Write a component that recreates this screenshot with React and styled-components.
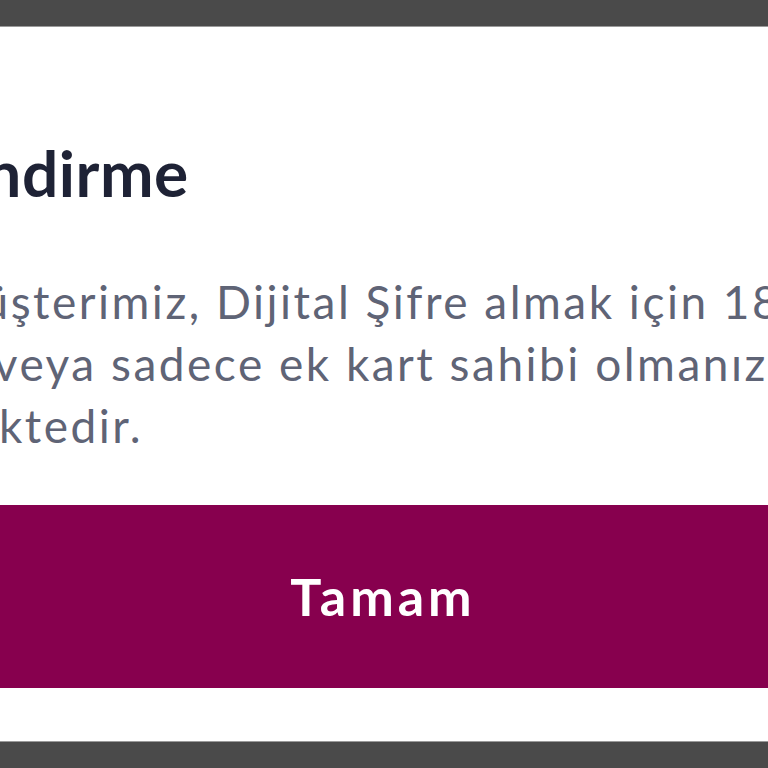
import React from "react";
import styled, { createGlobalStyle } from "styled-components";

const GlobalStyle = createGlobalStyle`
  html, body {
    margin: 0;
    padding: 0;
    background: #4a4a4a;
    overflow: hidden;
  }
  * { box-sizing: border-box; }
`;

const Backdrop = styled.div`
  width: 768px;
  height: 768px;
  background: #4a4a4a;
  padding: 26px 0;
  overflow: hidden;
`;

const Card = styled.div`
  height: 716px;
  width: 1270px;
  margin-left: -252px;
  background: #ffffff;
  border-top: 1px solid #9a9a9a;
  border-bottom: 1px solid #9a9a9a;
  padding: 108px 60px 0;
  display: flex;
  flex-direction: column;
  font-family: "Lato", "Noto Sans", sans-serif;
`;

const Title = styled.h2`
  margin: 0;
  font-size: 64px;
  line-height: 1.2;
  font-weight: 700;
  letter-spacing: 0.5px;
  color: #1e2235;
`;

const Message = styled.p`
  margin: 59px 0 0;
  font-size: 46px;
  line-height: 62px;
  letter-spacing: 2.5px;
  color: #5f6476;
  white-space: nowrap;
`;

const OkButton = styled.button`
  margin-top: 48px;
  height: 183px;
  width: 100%;
  border: none;
  background: #87004e;
  color: #ffffff;
  font-family: inherit;
  font-size: 52px;
  font-weight: 700;
  letter-spacing: 4px;
  cursor: pointer;
`;

const App = () => {
  return (
    <Backdrop>
      <GlobalStyle />
      <Card>
        <Title>Bilgilendirme</Title>
        <Message>
          Sayın müşterimiz, Dijital Şifre almak için 18 yaşından büyük
          <br />
          olmanız veya sadece ek kart sahibi olmanız
          <br />
          gerekmektedir.
        </Message>
        <OkButton>Tamam</OkButton>
      </Card>
    </Backdrop>
  );
};

export default App;
